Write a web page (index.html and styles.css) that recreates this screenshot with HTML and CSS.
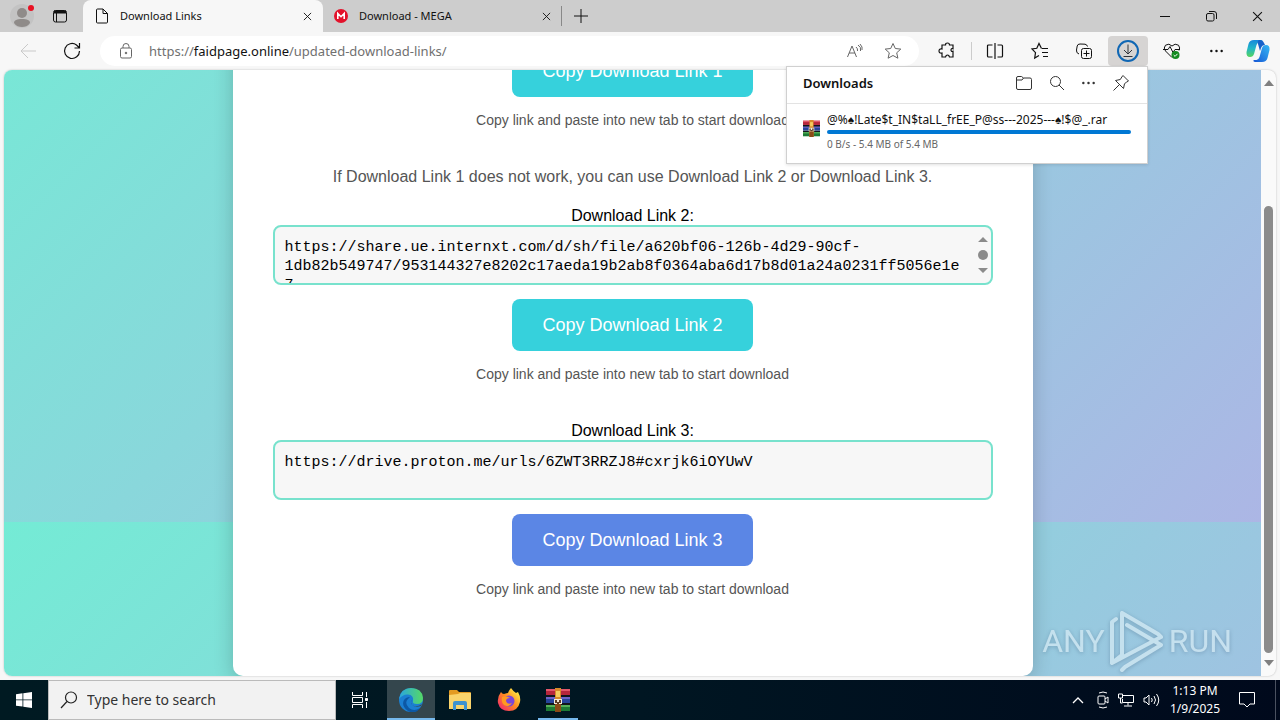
FILE: index.html
```html
<!DOCTYPE html>
<html lang="en">
<head>
<meta charset="utf-8">
<title>Download Links</title>
<link rel="stylesheet" href="styles.css">
</head>
<body>
<svg class="defs" aria-hidden="true">
  <symbol id="x" viewBox="0 0 10 10"><path d="M1 1l8 8M9 1l-8 8"/></symbol>
  <symbol id="dots" viewBox="0 0 16 16"><g fill="currentColor" stroke="none"><circle cx="2.500" cy="8" r="1.300"/><circle cx="8" cy="8" r="1.300"/><circle cx="13.500" cy="8" r="1.300"/></g></symbol>
  <symbol id="rar" viewBox="0 0 24 24"><g stroke="none">
    <path fill="#b6263c" d="M0 1h24v6H0z"/><path fill="#e2576a" d="M0 1h24v2H0z"/>
    <path fill="#27449b" d="M0 9h24v6H0z"/><path fill="#6b63c9" d="M0 9h24v2H0z"/>
    <path fill="#1c7a35" d="M0 17h24v6H0z"/><path fill="#54b058" d="M0 17h24v2H0z"/>
    <path fill="#10151c" d="M0 7h24v2H0zM0 15h24v2H0z"/>
    <path fill="#d88a2a" d="M9 0h6v24H9z"/><path fill="#8a4a17" d="M9 16h6v8H9z"/><path fill="#f4cc5f" d="M10 3h4v6h-4z"/>
    <path fill="#f4ead8" d="M8 11h8v5H8z"/><path fill="#5b3b24" d="M9 12h2v3H9zM13 12h2v3h-2zM11 14h2v2h-2z"/></g></symbol>
</svg>
<div class="screen">
  <header class="tabs">
    <div class="tools">
      <button class="plain" aria-label="Profile"><svg width="28" height="28" viewBox="0 0 28 28"><circle cx="14" cy="14" r="12" fill="#c3c3c3"/><circle cx="14" cy="11" r="5" fill="#8f8b89"/><path d="M6 21c0-3 3-4 8-4s8 1 8 4c-2 3-5 4-8 4s-6-1-8-4z" fill="#8f8b89"/><circle cx="23" cy="6" r="3" fill="#e81123"/></svg></button>
      <button class="plain" aria-label="Tab actions"><svg class="ic" width="16" height="16" viewBox="0 0 16 16"><rect x="1.500" y="2.500" width="13" height="11.500" rx="2"/><path d="M2 4h12" stroke-width="3"/><path d="M4.500 5v9"/></svg></button>
    </div>
    <div class="tab active">
      <svg class="ic" width="16" height="16" viewBox="0 0 16 16"><path d="M2.500 2q0-1 1-1H9l4.500 4.500V14q0 1-1 1h-9q-1 0-1-1zM9 1v4.500h4.500"/></svg>
      <span class="name">Download Links</span>
      <button class="plain" aria-label="Close tab"><svg class="ic" width="9" height="9"><use href="#x"/></svg></button>
    </div>
    <div class="tab">
      <svg width="16" height="16" viewBox="0 0 16 16"><circle cx="8" cy="8" r="7" fill="#e3122b"/><path d="M4.800 11V5.500L8 8.700l3.200-3.200V11" fill="none" stroke="#fff" stroke-width="1.600"/></svg>
      <span class="name">Download - MEGA</span>
      <button class="plain" aria-label="Close tab"><svg class="ic" width="9" height="9"><use href="#x"/></svg></button>
    </div>
    <button class="plain new" aria-label="New tab"><svg class="ic" width="14" height="14" viewBox="0 0 14 14"><path d="M7 0v14M0 7h14"/></svg></button>
    <div class="window">
      <button class="plain" aria-label="Minimize"><svg class="ic" width="10" height="10" viewBox="0 0 10 10"><path d="M0 5.500h10"/></svg></button>
      <button class="plain" aria-label="Restore"><svg class="ic" width="11" height="11" viewBox="0 0 11 11"><rect x=".5" y="2.500" width="7.500" height="7.500" rx="1.500"/><path d="M3 .5h5Q10.500.5 10.500 3v5"/></svg></button>
      <button class="plain" aria-label="Close"><svg class="ic" width="11" height="11"><use href="#x"/></svg></button>
    </div>
  </header>

  <nav class="toolbar">
    <button class="tool faint" aria-label="Back"><svg class="ic" width="16" height="16" viewBox="0 0 16 16"><path d="M16 8H1M8 1L1 8l7 7"/></svg></button>
    <button class="tool" aria-label="Refresh"><svg class="ic" width="18" height="18" viewBox="0 0 18 18"><path stroke-width="1.200" d="M16.500 9A7.500 7.500 0 1 1 13.500 3L16 5.500M16.500 1v5h-5"/></svg></button>
    <form class="address">
      <svg class="ic" width="14" height="16" viewBox="0 0 14 16"><rect x="1.500" y="5" width="11" height="10" rx="1.500"/><path d="M4 5V3.500a3 3 0 0 1 6 0V5"/><circle cx="7" cy="10" r=".8" fill="currentColor"/></svg>
      <a class="url" href="#page">https://<b>faidpage.online</b>/updated-download-links/</a>
      <button type="button" class="tool" aria-label="Read aloud"><svg class="ic" width="18" height="16" viewBox="0 0 18 16"><path d="M1.500 14L6 3l4.500 11M3 10h6M10 4q2 1.500 1.500 4M12 2q3.500 2 2.500 6M14 1q3 3 2 6"/></svg></button>
      <button type="button" class="tool" aria-label="Favorite"><svg class="ic" width="18" height="18" viewBox="0 0 18 18"><path d="M9 1.500l2.300 5 5.500.6-4.100 3.700 1.200 5.400L9 13.500l-4.900 2.700 1.200-5.400L1.200 7.100l5.500-.6z"/></svg></button>
    </form>
    <button class="tool" aria-label="Extensions"><svg class="ic" width="18" height="18" viewBox="0 0 18 18"><path stroke-width="1.200" d="M4 3h3.500q0-2 2-2t2 2H15v3.800q-2-.8-2 1.200t2 1.200V15h-3.500q-.5-2-2-2t-2 2H4v-4Q1 11.500 1 9t3-2z"/></svg></button>
    <span class="sep"></span>
    <button class="tool" aria-label="Split screen"><svg class="ic" width="18" height="16" viewBox="0 0 18 16"><path stroke-width="1.200" d="M6.500 2H2.500q-1 0-1 1v10q0 1 1 1h4M11.500 2h4q1 0 1 1v10q0 1-1 1h-4M9 0v16"/></svg></button>
    <button class="tool" aria-label="Favorites"><svg class="ic" width="18" height="18" viewBox="0 0 18 18"><path stroke-width="1.200" d="M10.500 6.500L8 1.500 5.800 6.300 1 7l3.500 3.600-.8 5.400L8 13.500M11 6.500h6M11 10.500h6M12 14.500h5"/></svg></button>
    <button class="tool" aria-label="Collections"><svg class="ic" width="18" height="18" viewBox="0 0 18 18"><rect x="6.500" y="6.500" width="10" height="10" rx="2"/><path d="M11.500 8.500v6M8.500 11.500h6M4 12Q1 11 1.500 8l.7-4Q2.500 2 5 2l5 .2q2 .3 2.500 2.300"/></svg></button>
    <div class="downloads">
      <button class="tool pressed" aria-label="Downloads"><svg class="ic" width="24" height="24" viewBox="0 0 24 24"><circle cx="12" cy="12" r="10" stroke="#1067b4" stroke-width="2"/><path stroke="#30343b" d="M12 5.500v9M8 11l4 4 4-4M7.500 17.500h9"/></svg></button>
      <section class="popup">
        <div class="popup-head">
          <h2>Downloads</h2>
          <button class="plain" aria-label="Open folder"><svg class="ic" width="18" height="16" viewBox="0 0 18 16"><path d="M1.500 3q0-1.500 1.500-1.500h3.500L8.500 3H15q1.500 0 1.500 1.500V13q0 1.500-1.500 1.500H3Q1.500 14.500 1.500 13zM1.500 5H7l1.500-2"/></svg></button>
          <button class="plain" aria-label="Search downloads"><svg class="ic" width="16" height="16" viewBox="0 0 16 16"><circle cx="6.500" cy="6.500" r="5"/><path d="M10 10l5 5"/></svg></button>
          <button class="plain" aria-label="More"><svg class="ic" width="15" height="16"><use href="#dots"/></svg></button>
          <button class="plain" aria-label="Pin"><svg class="ic" width="18" height="18" viewBox="0 0 18 18"><path d="M11 1.500l5.500 5.500-2 1.200-2 1.500-1 4.800-8-8 4.800-1L9.800 3zM7 11l-5.500 5.500"/></svg></button>
        </div>
        <div class="item">
          <svg width="17" height="17"><use href="#rar"/></svg>
          <div class="info">
            <span class="file">@%♠!Late$t_IN$taLL_frEE_P@ss---2025---♠!$@_.rar</span>
            <div class="bar"></div>
            <span class="status">0 B/s - 5.4 MB of 5.4 MB</span>
          </div>
        </div>
      </section>
    </div>
    <button class="tool" aria-label="Browser essentials"><svg class="ic" width="18" height="18" viewBox="0 0 18 18"><path d="M9 15.500L2.500 9Q0 6 2.500 3.200 6 .8 9 4q3-3.200 6.500-.8Q17.500 6 16 8.500M0 7.500h5l2-3 3 6 2-3h5"/><circle cx="12.500" cy="13" r="4" fill="#138a20" stroke="none"/><path d="M10.700 13l1.400 1.400 2.400-2.600" stroke="#fff"/></svg></button>
    <button class="tool" aria-label="Settings"><svg class="ic" width="15" height="16"><use href="#dots"/></svg></button>
    <button class="tool" aria-label="Copilot"><svg width="24" height="24" viewBox="0 0 24 24"><defs><linearGradient id="ca" x1="0" y1="0" x2="0" y2="1"><stop offset="0" stop-color="#1688dc"/><stop offset=".5" stop-color="#22b7c7"/><stop offset="1" stop-color="#57d45c"/></linearGradient><linearGradient id="cb" x1="1" y1="0" x2="0" y2="1"><stop offset="0" stop-color="#35b8f4"/><stop offset="1" stop-color="#1656d5"/></linearGradient></defs><path fill="url(#ca)" d="M8 1h7q2 0 1.500 2h-3q-2 0-3 3l-2.500 9q-1 3-4 3-4 0-3.500-5l2-8q1-4 5.500-4z"/><path fill="url(#cb)" d="M16 23H9q-2 0-1.500-2h3q2 0 3-3L16 9q1-3 4-3 4 0 3.500 5l-2 8q-1 4-5.500 4z"/><path fill="#1761c9" d="M13 1q4 0 5 3l1 2q-3 0-4 3l-1 3L12 5q-1-3 1-4z"/></svg></button>
  </nav>

  <div class="view">
    <main class="page" id="page">
      <div class="card">
        <button class="copy">Copy Download Link 1</button>
        <p class="hint">Copy link and paste into new tab to start download</p>
        <p class="note">If Download Link 1 does not work, you can use Download Link 2 or Download Link 3.</p>
        <label for="l2">Download Link 2:</label>
        <div class="field">
          <textarea id="l2" class="long" readonly>https://share.ue.internxt.com/d/sh/file/a620bf06-126b-4d29-90cf-1db82b549747/953144327e8202c17aeda19b2ab8f0364aba6d17b8d01a24a0231ff5056e1e7</textarea>
          <svg class="mini" width="12" height="40" viewBox="0 0 12 40" fill="#8b8b8b"><path d="M1 7l5-5 5 5zM1 33l5 5 5-5z"/><circle cx="6" cy="20" r="5"/></svg>
        </div>
        <button class="copy">Copy Download Link 2</button>
        <p class="hint">Copy link and paste into new tab to start download</p>
        <label for="l3" class="next">Download Link 3:</label>
        <div class="field"><textarea id="l3" readonly>https://drive.proton.me/urls/6ZWT3RRZJ8#cxrjk6iOYUwV</textarea></div>
        <button class="copy blue">Copy Download Link 3</button>
        <p class="hint">Copy link and paste into new tab to start download</p>
      </div>
      <div class="mark"><span>ANY</span><svg width="56" height="62" viewBox="0 0 56 62" fill="none" stroke="currentColor" stroke-width="4" stroke-linejoin="round" stroke-linecap="round"><path d="M7 9L3 12v41l49-26-3-3L13 3v42M18 15l34 20-36 22-3 3M3 53l10-8"/></svg><span>RUN</span></div>
    </main>
    <div class="scroll">
      <svg width="10" height="6" viewBox="0 0 10 6" fill="#808080"><path d="M0 6l5-6 5 6z"/></svg>
      <div class="track"><div class="thumb"></div></div>
      <svg width="10" height="6" viewBox="0 0 10 6" fill="#808080"><path d="M0 0l5 6 5-6z"/></svg>
    </div>
  </div>

  <footer class="taskbar">
    <button class="task" aria-label="Start"><svg width="16" height="16" viewBox="0 0 16 16" fill="#fff"><path d="M0 2.200l6.500-.9v6.200H0zM7.300 1.200L16 0v7.500H7.300zM0 8.300h6.500v6.300L0 13.700zM7.300 8.300H16V16l-8.700-1.200z"/></svg></button>
    <div class="search"><svg class="ic" width="18" height="18" viewBox="0 0 18 18"><circle cx="11" cy="6.500" r="5.500" stroke-width="1.200"/><path stroke-width="1.200" d="M7 10.500L1 17"/></svg><input type="text" aria-label="Search" placeholder="Type here to search"></div>
    <button class="task" aria-label="Task view"><svg class="ic" width="18" height="18" viewBox="0 0 18 18"><path d="M1.500 1v3.500h10V1M1.500 17v-3.500h10V17M1.500 6.500h10v5h-10zM15.500 1v5M15.500 11v6"/><path fill="currentColor" d="M14.500 7.500h2v2h-2z"/></svg></button>
    <div class="apps">
      <button class="task on" aria-label="Edge"><svg width="24" height="24" viewBox="0 0 24 24"><defs><linearGradient id="ea" x1="0" y1="0" x2="1" y2="0"><stop offset="0" stop-color="#2aa6e0"/><stop offset="1" stop-color="#55d965"/></linearGradient></defs><circle cx="12" cy="12" r="12" fill="#1b7fd2"/><path fill="url(#ea)" d="M0 11Q2 0 12 0q11 0 12 10 0 6-6 6-5 0-4-3 1-6-5-6.500Q4 6 0 11z"/><path fill="#0c58a5" d="M9 11q-4 4 1 9 5 4 11 0-5 7-12 3Q2 18 5 12q2-3 6-3z"/><path fill="#3a4b52" d="M13 12q-3 4 2 6 4 1 8-2l-1 2q-6 2-9-1-2-3 0-5z"/></svg></button>
      <button class="task" aria-label="File Explorer"><svg width="22" height="20" viewBox="0 0 22 20"><path fill="#e39b22" d="M0 1q0-1 1-1h7l2 2h11q1 0 1 1v4H0z"/><path fill="#fad46b" d="M0 5l9-1 2-1h11v16H0z"/><path fill="#3e92cf" d="M4 20v-7q0-2 2-2h10q2 0 2 2v7h-3v-5H7v5z"/></svg></button>
      <button class="task" aria-label="Firefox"><svg width="24" height="24" viewBox="0 0 24 24"><defs><linearGradient id="ff" x1="1" y1="0" x2="0" y2="1"><stop offset=".1" stop-color="#fff04a"/><stop offset=".5" stop-color="#ff8a20"/><stop offset="1" stop-color="#f0157c"/></linearGradient></defs><path fill="url(#ff)" d="M4 4q1 2 3 2 3-1 4-1 1-3 3-5 2 3 5 5l2-1q3 5 2 10-2 9-11 9T1 15Q0 9 4 4z"/><circle cx="12" cy="13" r="5.500" fill="#7b46d9"/><path fill="#ff9a20" d="M5 9q4-2 8 1-4 0-4 3 1 4 6 2-3 5-8 2-3-3-2-8z"/></svg></button>
      <button class="task run" aria-label="WinRAR"><svg width="24" height="24"><use href="#rar"/></svg></button>
    </div>
    <div class="tray">
      <svg class="ic chevron" width="12" height="12" viewBox="0 0 12 12"><path d="M1 9l5-5 5 5" stroke-width="1.300"/></svg>
      <svg class="ic" width="12" height="18" viewBox="0 0 12 18"><rect x="1" y="5" width="7" height="8" rx="1"/><path d="M8 8l3-2v6l-3-2M2 2q4-2 8 0M2 16q4 2 8 0"/></svg>
      <svg class="ic" width="18" height="16" viewBox="0 0 18 16"><path d="M6 3.500h10.500v7H5.500V7M11 10.500v3M7 14h8M1.500 2h4v4h-4zM3.500 6v5h2"/></svg>
      <svg class="ic" width="18" height="16" viewBox="0 0 18 16"><path d="M1 6v4h2l3 3V3L3 6zM8.500 6q1.500 2 0 4M11 4q3 4 0 8M13.500 2q4.500 6 0 12"/></svg>
      <div class="clock"><time>1:13 PM</time><time>1/9/2025</time></div>
      <svg class="ic note-icon" width="18" height="18" viewBox="0 0 18 18"><path d="M1.500 1.500h15v11.500H12L9 16l-3-3H1.500z"/></svg>
    </div>
  </footer>
</div>
</body>
</html>
```
FILE: styles.css
```css
* { box-sizing: border-box; }
body { margin: 0; font: 12px/16px "Noto Sans", "Open Sans", sans-serif; color: #111; }
button, input, textarea { font: inherit; color: inherit; }
svg { flex: none; display: block; }
.defs { position: absolute; width: 0; height: 0; }
.ic { fill: none; stroke: currentColor; stroke-width: 1; overflow: visible; }
.screen { height: 100vh; display: flex; flex-direction: column; background: #f7f7f7; overflow: hidden; }
.plain { border: 0; background: none; padding: 0; display: flex; align-items: center; justify-content: center; }

.tabs { height: 32px; flex: none; display: flex; background: #cdcdcd; }
.tools { width: 83px; display: flex; align-items: center; gap: 16px; padding-left: 8px; }
.tab { width: 239px; display: flex; align-items: center; gap: 10px; padding: 0 11px 0 10px; }
.tab.active { background: #f7f7f7; border-radius: 8px 8px 0 0; width: 240px; padding-left: 11px; }
.name { flex: 1; white-space: nowrap; font-size: 11px; }
.new { width: 38px; position: relative; }
.new::before { content: ""; width: 1px; height: 20px; background: #888; position: absolute; left: -1px; top: 6px; }
.window { margin-left: auto; display: flex; }
.window .plain { width: 46px; }

.toolbar { height: 38px; flex: none; display: flex; align-items: center; gap: 4px; padding: 0 2px 0 8px; position: relative; z-index: 2; }
.tool { width: 40px; height: 30px; border: 0; border-radius: 4px; background: none; padding: 0; flex: none; display: flex; align-items: center; justify-content: center; }
.faint { color: #c9c9c9; }
.address { flex: 1; height: 30px; margin: 0 4px; border-radius: 15px; background: #fff; display: flex; align-items: center; padding: 0 6px 0 19px; color: #666; }
.url { flex: 1; margin-left: 16px; color: #707070; text-decoration: none; font-size: 13px; white-space: nowrap; }
.url b { font-weight: 400; color: #111; }
.sep { width: 1px; height: 18px; background: #ccc; }
.sep + .tool { margin-right: 1px; margin-left: -1px; }
.tool:last-child { margin-left: -2px; }
.downloads { position: relative; }
.pressed { background: #d6d4d3; }

.popup { position: absolute; top: 30px; right: 0; width: 362px; background: #fff; border: 1px solid #d0d0d0; box-shadow: 0 1px 3px rgba(0, 0, 0, .12); }
.popup-head { height: 37px; display: flex; align-items: center; gap: 16px; padding: 0 17px 4px 16px; border-bottom: 1px solid #e3e3e3; color: #333; }
.popup h2 { flex: 1; margin: 0; font-size: 13px; font-weight: 600; color: #111; }
.item { display: flex; gap: 7px; padding: 8px 16px 11px; }
.item svg { margin-top: 8px; }
.info { flex: 1; min-width: 0; }
.file { display: block; white-space: nowrap; }
.bar { height: 4px; border-radius: 2px; background: #0078d4; margin: 2px 0; }
.status { display: block; font-size: 10px; color: #666; }

.view { flex: 1; min-height: 0; display: flex; margin: 0 4px 4px; border-radius: 8px; overflow: hidden; box-shadow: 0 0 2px rgba(0, 0, 0, .25); background: #fafafa; }
.page { flex: 1; position: relative; overflow: hidden; display: flex; justify-content: center; align-items: flex-end; background: linear-gradient(135deg, #74ebd5, #acb6e5) 0 -154px / 100% 100%; }
.card { width: 800px; max-width: 100%; flex: none; background: #fff; border-radius: 10px; box-shadow: 0 4px 20px rgba(0, 0, 0, .2); padding: 40px 40px 79px; display: flex; flex-direction: column; align-items: center; font: 16px/20px "Liberation Sans", Arial, sans-serif; color: #000; }
.copy { height: 52px; padding: 0 30px; border: 0; border-radius: 8px; background: #36d1dc; color: #fff; font-size: 18px; }
.blue { background: #5b86e5; }
.hint { margin: 15px 0 0; font-size: 14px; line-height: 16px; color: #555; }
.note { margin: 39px 0 19px; color: #555; }
.card label { line-height: 19px; }
.next { margin-top: 39px; }
.field { width: 100%; position: relative; margin-bottom: 14px; }
.field textarea { display: block; width: 100%; height: 60px; border: 2px solid #78e2cd; border-radius: 8px; background: #f7f7f7; padding: 11px 10px; resize: none; overflow: hidden; outline: 0; font: 15px/19px "Liberation Mono", monospace; }
.field .long { padding-right: 28px; }
.mini { position: absolute; right: 4px; top: 10px; }
.mark { position: absolute; right: 29px; bottom: 4px; display: flex; align-items: center; gap: 4px; color: #d8ecf5; opacity: .7; font: 400 32px/40px Roboto, sans-serif; filter: drop-shadow(0 1px 2px rgba(60, 90, 120, .5)); }
.scroll { width: 15px; flex: none; display: flex; flex-direction: column; align-items: center; padding: 10px 0; }
.track { flex: 1; width: 9px; padding: 120px 0 7px; }
.thumb { height: 100%; border-radius: 5px; background: #8b8b8b; }

.taskbar { height: 40px; flex: none; display: flex; color: #fff; background: linear-gradient(90deg, #001a22, #001622 50%, #00091c); }
.task { width: 48px; height: 40px; border: 0; background: none; padding: 0; display: flex; align-items: center; justify-content: center; }
.search { width: 288px; background: #f2f2f2; border: 1px solid #bbb; color: #222; display: flex; align-items: center; gap: 9px; padding-left: 11px; }
.search input { flex: 1; min-width: 0; border: 0; outline: 0; padding: 0; background: none; font-size: 14px; line-height: 20px; }
.search input::placeholder { color: #333; opacity: 1; }
.apps { display: flex; gap: 1px; padding-left: 3px; }
.on { background: #34464d; }
.on, .run { border-bottom: 2px solid #76b9ed; padding-top: 2px; }
.run { width: 40px; margin-left: 4px; }
.tray { margin-left: auto; display: flex; align-items: center; gap: 8px; padding-right: 4px; }
.chevron { margin-right: 5px; }
.clock { width: 56px; margin-left: -2px; display: flex; flex-direction: column; align-items: center; line-height: 18px; }
.note-icon { margin: 0 19px 0 7px; }
.tray::after { content: ""; width: 1px; height: 40px; background: #4a5160; margin-left: -8px; }
```
